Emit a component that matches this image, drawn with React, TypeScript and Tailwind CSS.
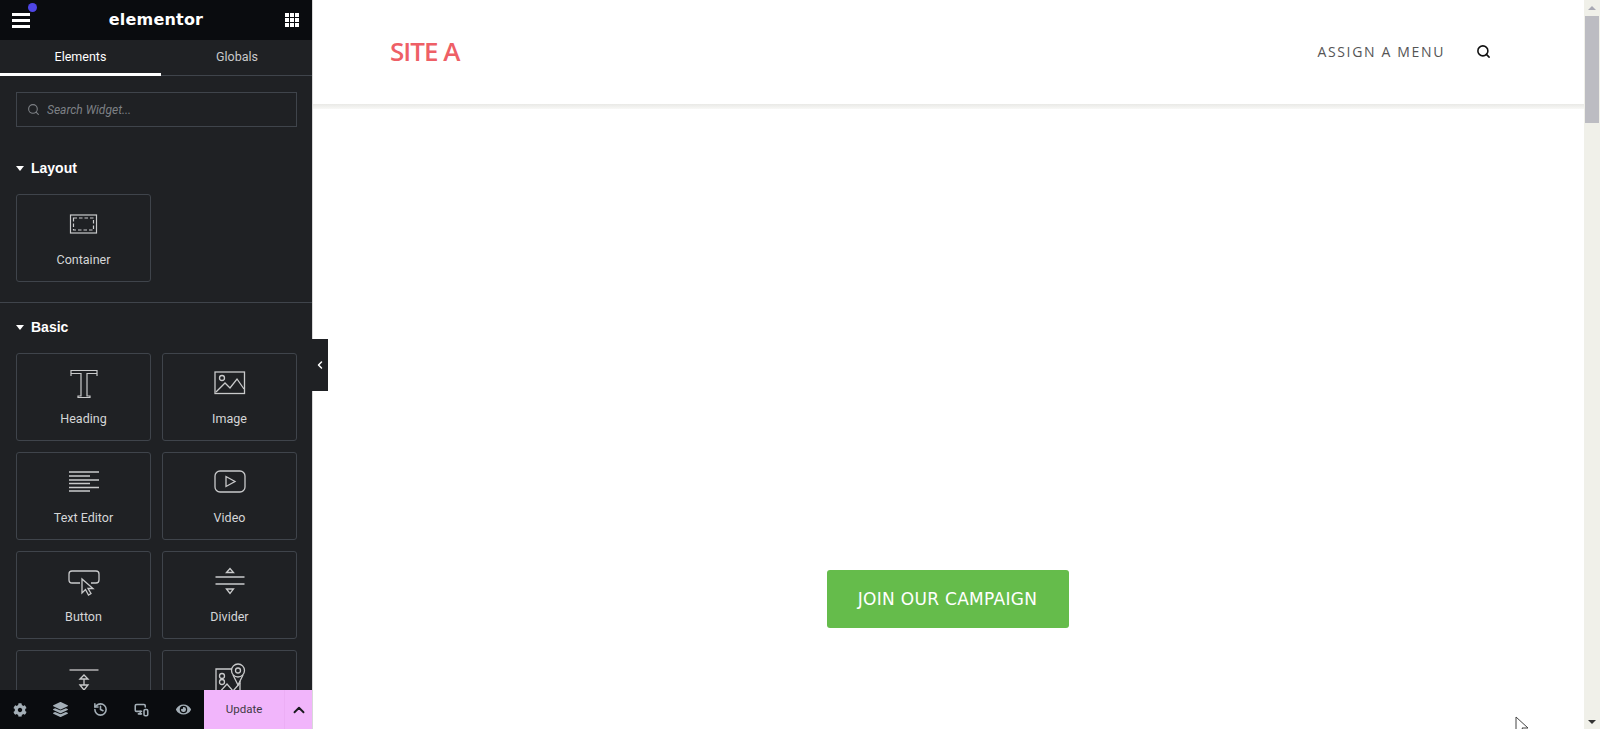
import { ChevronLeft, ChevronUp, Search, History, MonitorSmartphone } from "lucide-react";
import { FaCog, FaEye, FaLayerGroup } from "react-icons/fa";
import type { ReactNode } from "react";

const iconCls = "h-[40px] w-[40px] fill-none stroke-[#c9cacb]";

function ContainerIcon() {
  return (
    <svg viewBox="0 0 40 40" className={iconCls}>
      <rect x="6.5" y="10" width="26" height="18" strokeWidth="1.2" />
      <rect x="9.5" y="13" width="20" height="12" strokeWidth="1.2" strokeDasharray="3.5 2" />
    </svg>
  );
}

function HeadingIcon() {
  return (
    <svg viewBox="0 0 40 40" className={iconCls} strokeWidth="1.2">
      <path d="M7 12V6.500h26V12M7 12V9.500h10V32h-3v1.500h12V32h-3V9.500h10V12" />
    </svg>
  );
}

function ImageIcon() {
  return (
    <svg viewBox="0 0 40 40" className={iconCls} strokeWidth="1.3">
      <rect x="5" y="8" width="29.500" height="21.500" />
      <circle cx="12" cy="14" r="2.500" />
      <path d="M6 28l9-9 5 5 7-9 7 10" />
    </svg>
  );
}

function TextEditorIcon() {
  return (
    <svg viewBox="0 0 40 40" className={iconCls} strokeWidth="1.3">
      <path d="M5 9h30M5 13h21M5 17h30M5 20.500h21M5 24.500h30M5 28h21" />
    </svg>
  );
}

function VideoIcon() {
  return (
    <svg viewBox="0 0 40 40" className={iconCls} strokeWidth="1.3">
      <rect x="5" y="8" width="30" height="21" rx="5" />
      <path d="M16 13.500v10l9-5z" />
    </svg>
  );
}

function ButtonIcon() {
  return (
    <svg viewBox="0 0 40 40" className={iconCls} strokeWidth="1.3">
      <path d="M16 21H8a3 3 0 0 1-3-3v-6a3 3 0 0 1 3-3h24a3 3 0 0 1 3 3v6a3 3 0 0 1-3 3h-5" />
      <path d="M18 17l0 14 3.500-3.500 3 5.500 2.500-1.500-3-5h5z" />
    </svg>
  );
}

function DividerIcon() {
  return (
    <svg viewBox="0 0 40 40" className={iconCls} strokeWidth="1.3">
      <path d="M5.500 15h29M5.500 22h29" />
      <path d="M16.500 10.500l3.500-4 3.500 4zM16.500 27l3.500 4.500 3.500-4.500z" />
    </svg>
  );
}

function SpacerIcon() {
  return (
    <svg viewBox="0 0 40 40" className={iconCls} strokeWidth="1.3">
      <path d="M5.500 9h29" />
      <path d="M16 18l4-4 4 4zM16 24l4 5 4-5z" />
      <path d="M20 18v6" />
    </svg>
  );
}

function MapIcon() {
  return (
    <svg viewBox="0 0 40 40" className={iconCls} strokeWidth="1.3">
      <path d="M22 8H6v28h24V20" />
      <circle cx="28" cy="9.500" r="6.500" />
      <circle cx="28" cy="9.500" r="2.500" />
      <path d="M23 14l5 10 5-10" />
      <path d="M7 34l10-11 6 7 7-8" />
      <circle cx="12" cy="15" r="2.500" />
      <circle cx="12" cy="21" r="2.500" />
    </svg>
  );
}

function Widget({ icon, label }: { icon: ReactNode; label?: string }) {
  return (
    <div className="flex h-[88px] flex-col items-center rounded-[3px] border border-[#3f444b] pt-[10px]">
      {icon}
      {label && <span className="mt-[6px] text-[12.5px] leading-[18px] text-[#d5d6d7]">{label}</span>}
    </div>
  );
}

function SectionTitle({ children }: { children: ReactNode }) {
  return (
    <div className="flex items-center gap-[7px] font-['Liberation_Sans',sans-serif] text-sm font-bold leading-none text-white">
      <span className="h-0 w-0 border-x-[4.500px] border-t-[5px] border-x-transparent border-t-white" />
      {children}
    </div>
  );
}

export default function App() {
  return (
    <div className="relative flex h-[729px] overflow-hidden bg-white font-['Roboto',sans-serif]">
      {/* Editor panel */}
      <aside className="flex w-[312px] shrink-0 flex-col bg-[#1f2124]">
        <div className="relative flex h-[40px] shrink-0 items-center justify-between bg-[#0a0c0f] pl-3 pr-[13px]">
          <div className="flex w-[18px] flex-col gap-[3px]">
            <span className="h-[3px] bg-white" />
            <span className="h-[3px] bg-white" />
            <span className="h-[3px] bg-white" />
          </div>
          <span className="absolute left-[28px] top-[3px] h-[9px] w-[9px] rounded-full bg-[#4f46e5]" />
          <span className="mr-[3px] font-['DejaVu_Sans',sans-serif] text-base font-bold leading-none tracking-[0.2px] text-white">
            elementor
          </span>
          <div className="grid grid-cols-3 gap-[1px]">
            {Array.from({ length: 9 }).map((_, i) => (
              <span key={i} className="h-[4px] w-[4px] bg-white" />
            ))}
          </div>
        </div>

        <div className="flex h-[36px] shrink-0 border-b border-[#3f444b] text-[12.5px]">
          <div className="-mb-px flex w-[161px] items-center justify-center border-b-[3px] border-white pt-[1px] text-white">
            Elements
          </div>
          <div className="flex flex-1 items-center justify-center pl-[1px] text-[#c9cacb]">Globals</div>
        </div>

        <div className="min-h-0 flex-1 overflow-hidden">
          <div className="px-4 pt-4">
            <div className="flex h-[35px] w-[281px] items-center gap-[7px] border border-[#3f444b] pl-[10px]">
              <Search size={13} className="text-[#7d8085]" />
              <span className="text-xs italic text-[#7d8085]">Search Widget...</span>
            </div>
          </div>

          <div className="border-b border-[#3f444b] px-4 pb-[20px] pt-[34px]">
            <SectionTitle>Layout</SectionTitle>
            <div className="mt-[19px] grid grid-cols-[135px_135px] gap-[11px]">
              <Widget icon={<ContainerIcon />} label="Container" />
            </div>
          </div>

          <div className="px-4 pt-[17px]">
            <SectionTitle>Basic</SectionTitle>
            <div className="mt-[19px] grid grid-cols-[135px_135px] gap-x-[11px] gap-y-[11px]">
              <Widget icon={<HeadingIcon />} label="Heading" />
              <Widget icon={<ImageIcon />} label="Image" />
              <Widget icon={<TextEditorIcon />} label="Text Editor" />
              <Widget icon={<VideoIcon />} label="Video" />
              <Widget icon={<ButtonIcon />} label="Button" />
              <Widget icon={<DividerIcon />} label="Divider" />
              <Widget icon={<SpacerIcon />} />
              <Widget icon={<MapIcon />} />
            </div>
          </div>
        </div>

        <div className="relative flex h-[39px] shrink-0 bg-[#0a0c0f]">
          <div className="flex w-[204px] items-center justify-between pl-[13px] pr-[13px] text-[#a4afb7]">
            <FaCog size={14} />
            <FaLayerGroup size={15} />
            <History size={15} strokeWidth={2.500} />
            <MonitorSmartphone size={15} strokeWidth={2.500} className="mr-[2px]" />
            <FaEye size={15} />
          </div>
          <div className="flex flex-1 bg-[#f1b5fb] text-[#3f3a45]">
            <div className="flex flex-1 items-center justify-center pt-[1px] text-[11.5px]">Update</div>
            <div className="flex w-[28px] items-center justify-center border-l border-[#ecaef5]">
              <ChevronUp size={18} strokeWidth={2.500} className="text-[#1a1a1f]" />
            </div>
          </div>
        </div>
      </aside>

      {/* Collapse handle */}
      <div className="absolute left-[312px] top-[339px] flex h-[52px] w-[16px] items-center justify-center bg-[#1f2124]">
        <ChevronLeft size={12} strokeWidth={3} className="text-white" />
      </div>

      {/* Preview */}
      <main className="flex min-w-0 flex-1 flex-col border-l border-[#d8d8d8]">
        <header className="flex h-[104px] shrink-0 items-center justify-between pl-[77px] pr-[93px]">
          <span className="mb-[2px] font-['Open_Sans',sans-serif] text-[26px] font-semibold tracking-[-1px] text-[#ee5f66]">
            SITE A
          </span>
          <div className="flex items-center gap-[31px]">
            <span className="font-['Open_Sans',sans-serif] text-sm tracking-[1.65px] text-[#555]">
              ASSIGN A MENU
            </span>
            <Search size={15} strokeWidth={2.500} className="mb-[2px] text-[#111]" />
          </div>
        </header>
        <div className="h-[5px] shrink-0 bg-gradient-to-b from-[#e9e9e6] to-[#f8f8f6]" />
        <div className="flex flex-1 justify-center pr-[2px] pt-[461px]">
          <div className="flex h-[58px] w-[242px] items-center justify-center rounded-[3px] bg-[#65bc4b] pt-[2px] font-['DejaVu_Sans',sans-serif] text-[17px] tracking-[0.3px] text-white">
            JOIN OUR CAMPAIGN
          </div>
        </div>
      </main>

      {/* Scrollbar */}
      <div className="flex w-[16px] shrink-0 flex-col items-center bg-[#f0f0e9]">
        <span className="mt-[6px] h-0 w-0 border-x-[4px] border-b-[4px] border-x-transparent border-b-[#a9a9b4]" />
        <span className="mt-[6px] h-[107px] w-[14px] bg-[#bcbcc2]" />
        <span className="mb-[5px] mt-auto h-0 w-0 border-x-[4px] border-t-[4px] border-x-transparent border-t-[#333]" />
      </div>

      {/* Mouse pointer */}
      <svg viewBox="0 0 14 20" className="absolute left-[1515px] top-[716px] h-[20px] w-[14px] fill-white stroke-[#444]">
        <path d="M1 1v16l4-4 3 6 2-1-3-6h6z" />
      </svg>
    </div>
  );
}
